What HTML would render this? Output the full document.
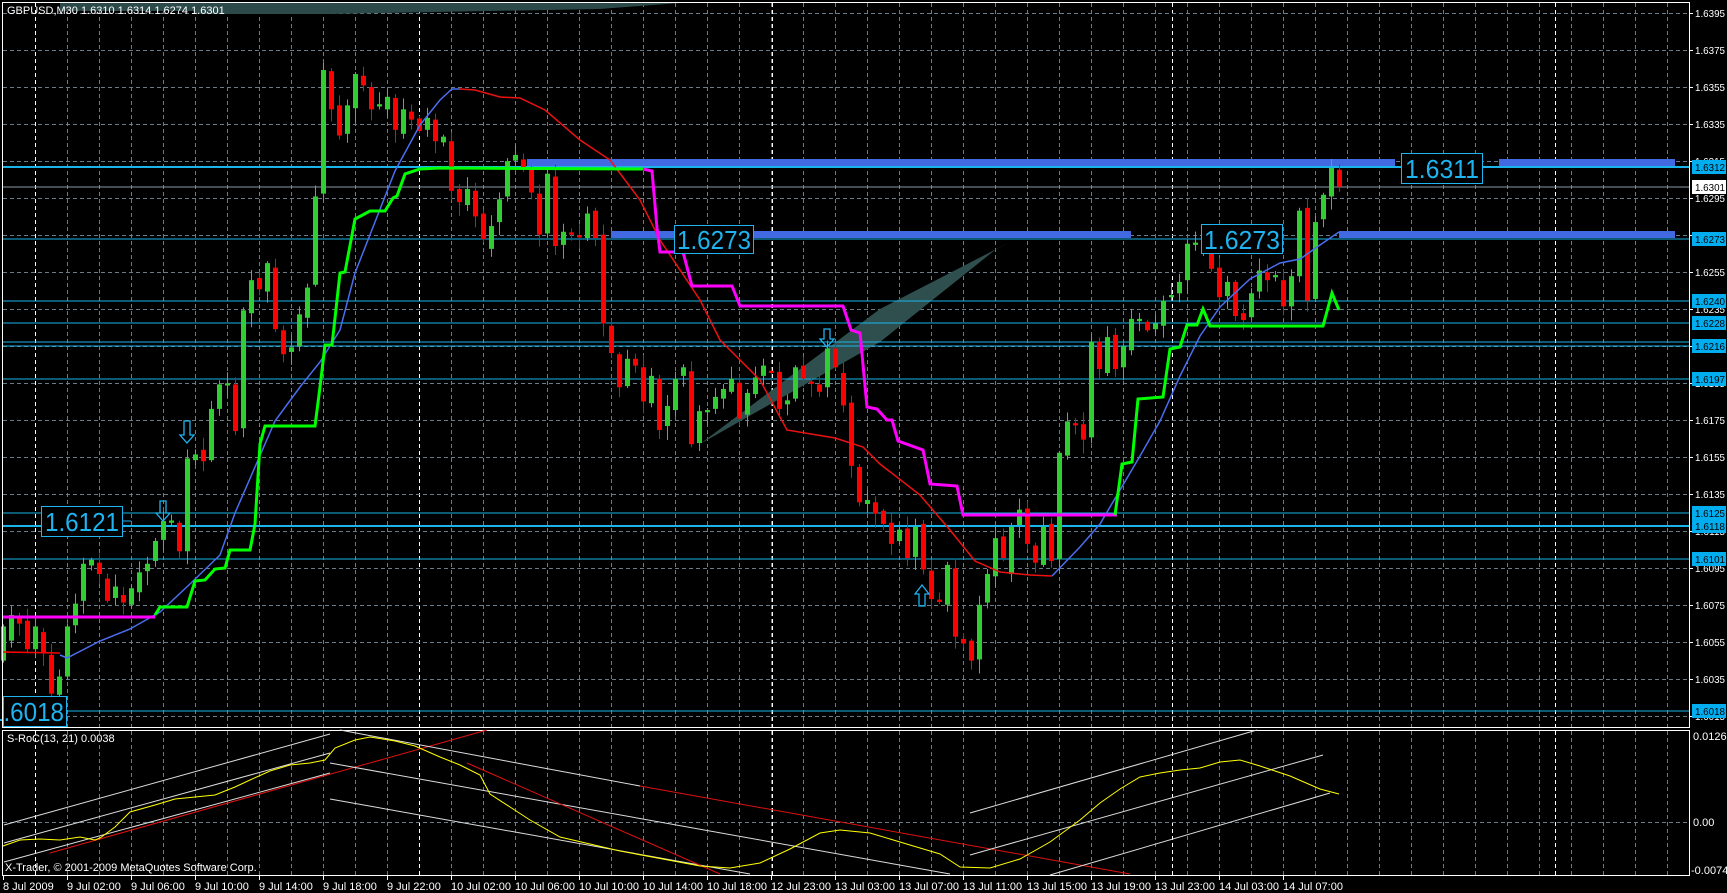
<!DOCTYPE html>
<html><head><meta charset="utf-8">
<style>
html,body{margin:0;padding:0;background:#000;width:1727px;height:893px;overflow:hidden}
svg{display:block}
text{font-family:"Liberation Sans",sans-serif}
</style></head>
<body>
<svg id="s" width="1727" height="893" xmlns="http://www.w3.org/2000/svg">
<rect width="1727" height="893" fill="#000"/>
<g id="grid"></g>
<polygon points="60,3 680,3 600,9 330,14 195,14 195,11 60,11" fill="#2c4a4a"/>
<polygon points="700,444 880,309 1010,242 995,250 880,342" fill="#2f4f4f"/>
<g id="hlines"></g>
<rect x="527" y="159" width="868" height="7" fill="#4169e1"/>
<rect x="1499" y="159" width="176" height="7" fill="#4169e1"/>
<rect x="611" y="231" width="520" height="7" fill="#4169e1"/>
<rect x="1339" y="231" width="336" height="7" fill="#4169e1"/>
<g id="candles"></g>
<polyline fill="none" stroke="#ff0000" stroke-width="1.5" points="3,652 60,653"/>
<polyline fill="none" stroke="#4a6ef0" stroke-width="1.5" points="60,655 67,658 100,641 130,629 160,612 190,584 220,555 235,513 255,467 275,421 300,387 320,362 340,330 355,273 375,222 395,171 420,125 440,100 452,89 460,89"/>
<polyline fill="none" stroke="#ee1111" stroke-width="1.5" points="460,89 475,90 500,97 520,98 545,110 580,140 610,160 640,200 660,240 680,270 700,300 720,340 740,360 760,380 787,430 835,438 863,447 880,464 920,495 950,530 975,561 1000,572 1030,575 1052,576"/>
<polyline fill="none" stroke="#4a6ef0" stroke-width="1.5" points="1052,576 1080,547 1100,524 1120,490 1140,456 1160,421 1180,376 1200,336 1220,307 1250,279 1280,263 1300,259 1320,245 1339,232"/>
<polyline fill="none" stroke="#ff00ff" stroke-width="3" points="3,617 155,617"/>
<polyline fill="none" stroke="#00ff00" stroke-width="3" points="155,615 160,607 187,607 195,581 205,580 215,569 225,568 230,550 250,550 255,524 260,444 265,426 315,426 320,387 325,345 332,345 340,273 345,272 355,219 370,211 385,211 393,198 397,196 405,174 420,169 440,168 643,169"/>
<polyline fill="none" stroke="#ff00ff" stroke-width="3" points="643,169 652,171 657,228 660,252 683,252 692,286 732,286 740,306 843,306 851,330 860,333 867,407 877,409 887,420 892,420 898,441 923,450 930,484 957,486 963,515 1117,515"/>
<polyline fill="none" stroke="#00ff00" stroke-width="3" points="1115,515 1122,464 1132,462 1138,399 1163,397 1170,349 1180,347 1187,325 1197,325 1203,309 1210,326 1323,326 1332,293 1339,310"/>
<g fill="none" stroke="#1fb4f0" stroke-width="1.3">
<path d="M160,501 h6 v12 h4 l-7,8 l-7,-8 h4 z"/>
<path d="M184,421 h6 v14 h4 l-7,8 l-7,-8 h4 z"/>
<path d="M824,329 h6 v10 h4 l-7,8 l-7,-8 h4 z"/>
<path d="M919,606 h6 v-12 h4 l-7,-9 l-7,9 h4 z"/>
</g>
<g fill="#000" stroke="#1fb4f0" stroke-width="1">
<rect x="1401.5" y="153.5" width="81" height="30"/>
<rect x="674.5" y="225.5" width="79" height="28"/>
<rect x="1201.5" y="224.5" width="81" height="29"/>
<rect x="41.5" y="506.5" width="81" height="30"/>
<rect x="3.5" y="696.5" width="63" height="30"/>
</g>
<line x1="1482" y1="167" x2="1492" y2="167" stroke="#1fb4f0"/>
<line x1="122" y1="521" x2="131" y2="521" stroke="#1fb4f0"/>
<g fill="#1fb4f0" font-size="26">
<text x="1405" y="178" textLength="74" lengthAdjust="spacingAndGlyphs">1.6311</text>
<text x="677" y="249" textLength="74" lengthAdjust="spacingAndGlyphs">1.6273</text>
<text x="1204" y="249" textLength="76" lengthAdjust="spacingAndGlyphs">1.6273</text>
<text x="45" y="531" textLength="74" lengthAdjust="spacingAndGlyphs">1.6121</text>
<text x="-10" y="721" textLength="74" lengthAdjust="spacingAndGlyphs">1.6018</text>
</g>
<rect x="2.5" y="2.5" width="1687" height="725" fill="none" stroke="#fff"/>
<rect x="2.5" y="730.5" width="1687" height="145" fill="none" stroke="#fff"/>
<g fill="none" stroke-width="1">
<line x1="4" y1="825" x2="330" y2="734" stroke="#ddd"/>
<line x1="4" y1="843" x2="330" y2="753" stroke="#ddd"/>
<line x1="4" y1="862" x2="330" y2="773" stroke="#ddd"/>
<line x1="50" y1="853" x2="487" y2="730" stroke="#e01010"/>
<line x1="340" y1="730" x2="640" y2="786" stroke="#ddd"/>
<line x1="640" y1="786" x2="1130" y2="874" stroke="#e01010"/>
<line x1="330" y1="763" x2="950" y2="874" stroke="#ddd"/>
<line x1="330" y1="799" x2="750" y2="874" stroke="#ddd"/>
<line x1="467" y1="763" x2="720" y2="874" stroke="#e01010"/>
<line x1="970" y1="813" x2="1257" y2="730" stroke="#ddd"/>
<line x1="970" y1="855" x2="1323" y2="755" stroke="#ddd"/>
<line x1="1050" y1="875" x2="1330" y2="793" stroke="#ddd"/>
<polyline stroke="#ffff00" points="3,846 20,840 40,839 60,840 80,837 95,840 100,838 115,827 130,812 155,805 175,799 195,797 215,795 235,787 250,780 270,771 290,765 310,763 325,760 335,748 355,740 370,737 395,741 415,746 440,757 460,765 480,775 490,794 530,820 560,837 620,851 700,866 730,868 760,863 790,849 820,833 840,830 870,833 900,842 940,854 960,867 990,868 1020,859 1050,842 1080,820 1100,803 1120,789 1140,777 1160,773 1180,770 1200,768 1220,762 1240,760 1260,766 1290,776 1320,789 1339,794"/>
</g>
<g fill="#fff" font-size="11">
<text x="7" y="14">GBPUSD,M30  1.6310 1.6314 1.6274 1.6301</text>
<text x="7" y="742">S-RoC(13, 21) 0.0038</text>
<text x="5" y="871">X-Trader, © 2001-2009 MetaQuotes Software Corp.</text>
<text x="1693" y="740">0.0126</text>
<text x="1693" y="826">0.00</text>
<text x="1691" y="874">-0.0074</text>
</g>
<g id="axis"></g>
</svg>
<script>
(function(){
var NS="http://www.w3.org/2000/svg";
function el(p,t,a,txt){var e=document.createElementNS(NS,t);for(var k in a)e.setAttribute(k,a[k]);if(txt!=null)e.textContent=txt;p.appendChild(e);return e;}
var g=document.getElementById('grid');
for(var x=35;x<1689;x+=32){el(g,'line',{x1:x+.5,y1:3,x2:x+.5,y2:875,stroke:'#6a7c8a','stroke-dasharray':'4,3'});}
[35,419,772,1172,1555].forEach(function(x){el(g,'line',{x1:x+.5,y1:3,x2:x+.5,y2:875,stroke:'#fff','stroke-dasharray':'4,3'});});
var ax=document.getElementById('axis');
var prices=['1.6395','1.6375','1.6355','1.6335','1.6315','1.6295','1.6275','1.6255','1.6235','1.6215','1.6195','1.6175','1.6155','1.6135','1.6115','1.6095','1.6075','1.6055','1.6035','1.6015'];
for(var i=0;i<20;i++){var y=13+37*i;el(g,'line',{x1:3,y1:y+.5,x2:1689,y2:y+.5,stroke:'#6a7c8a','stroke-dasharray':'4,3'});
 el(ax,'line',{x1:1689,y1:y+.5,x2:1693,y2:y+.5,stroke:'#fff'});
 el(ax,'text',{x:1695,y:y+4,fill:'#fff','font-size':'10.5',textLength:'30',lengthAdjust:'spacingAndGlyphs'},prices[i]);}
el(g,'line',{x1:3,y1:822.5,x2:1689,y2:822.5,stroke:'#6a7c8a','stroke-dasharray':'4,3'});
var h=document.getElementById('hlines');
var lv=[[167,'1.6312',2],[239,'1.6273',1],[301,'1.6240',1],[323,'1.6228',1],[342,'',1],[346,'1.6216',1],[379,'1.6197',1],[513,'1.6125',1],[526,'1.6118',2],[559,'1.6101',1],[711,'1.6018',1]];
lv.forEach(function(l){el(h,'line',{x1:3,y1:l[0],x2:1689,y2:l[0],stroke:'#1ab4ea','stroke-width':l[2]});
 if(l[1]){el(ax,'rect',{x:1692,y:l[0]-7,width:34,height:14,fill:'#00aeef'});el(ax,'text',{x:1695,y:l[0]+4,fill:'#000','font-size':'10.5',textLength:'30',lengthAdjust:'spacingAndGlyphs'},l[1]);}});
el(h,'line',{x1:3,y1:187,x2:1689,y2:187,stroke:'#8a9aa4'});
el(ax,'rect',{x:1692,y:180,width:34,height:14,fill:'#fff'});el(ax,'text',{x:1695,y:191,fill:'#000','font-size':'10.5',textLength:'30',lengthAdjust:'spacingAndGlyphs'},'1.6301');
var tl=['9 Jul 02:00','9 Jul 06:00','9 Jul 10:00','9 Jul 14:00','9 Jul 18:00','9 Jul 22:00','10 Jul 02:00','10 Jul 06:00','10 Jul 10:00','10 Jul 14:00','10 Jul 18:00','12 Jul 23:00','13 Jul 03:00','13 Jul 07:00','13 Jul 11:00','13 Jul 15:00','13 Jul 19:00','13 Jul 23:00','14 Jul 03:00','14 Jul 07:00'];
el(ax,'text',{x:3,y:890,fill:'#fff','font-size':'11'},'8 Jul 2009');
el(ax,'line',{x1:3.5,y1:876,x2:3.5,y2:880,stroke:'#fff'});
for(var i=0;i<tl.length;i++){var x=67+64*i;el(ax,'line',{x1:x+.5,y1:876,x2:x+.5,y2:880,stroke:'#fff'});el(ax,'text',{x:x,y:890,fill:'#fff','font-size':'11'},tl[i]);}
var d="g 1100 1160,g 1080 1125,r 1085 1095,r 1090 1140,g 1100 1140,r 1110 1145,r 1150 1218,g 1188 1220,g 1100 1188,g 1060 1098,g 990 1055,g 983 993,r 988 1008,r 1016 1055,g 1030 1050,r 1045 1058,g 1033 1062,g 1005 1040,g 990 1003,g 950 985,g 915 948,g 914 918,r 918 968,g 805 968,g 798 808,r 790 810,g 718 808,g 675 718,g 673 677,r 675 757,g 545 752,g 492 550,r 488 508,g 462 512,r 470 578,r 580 622,g 610 618,g 552 608,g 505 558,g 345 500,g 123 340,r 125 192,r 185 238,g 185 235,g 130 190,r 133 150,r 153 192,g 183 187,g 170 192,r 172 228,g 192 235,r 196 210,r 208 230,g 207 228,r 210 248,g 240 250,r 248 335,r 332 355,g 332 360,r 335 380,r 375 420,g 397 437,g 350 390,g 283 345,g 272 282,r 280 298,r 295 338,r 340 412,g 305 410,r 310 432,g 407 430,r 408 412,r 413 417,g 375 418,r 370 418,r 412 568,r 572 620,r 622 680,g 630 678,r 630 642,r 645 705,g 660 708,r 665 755,g 713 748,g 665 720,g 645 660,r 652 780,g 722 778,g 720 724,g 697 718,g 683 700,g 665 688,r 672 735,g 690 728,g 663 692,g 642 660,r 651 655,r 653 718,g 703 710,g 645 700,r 642 665,r 670 674,r 675 688,g 612 680,r 612 645,r 655 712,r 707 818,r 820 882,g 878 885,r 882 902,r 897 920,r 918 955,g 930 950,r 928 980,g 925 978,r 920 1000,r 1002 1052,r 1053 1057,g 992 1062,r 998 1118,r 1122 1130,r 1125 1160,g 1062 1158,g 1008 1058,g 945 1012,r 942 980,g 925 1008,g 895 922,r 893 955,r 958 988,g 925 992,r 920 985,g 795 982,g 740 800,r 743 747,r 745 772,g 600 768,r 600 648,g 592 655,r 588 648,g 608 645,g 560 615,g 560 564,r 565 580,g 568 578,g 528 572,g 518 522,g 495 515,g 428 492,g 426 430,g 426 430,r 428 472,r 470 522,g 495 520,r 495 555,r 550 562,g 515 557,g 475 512,r 478 492,g 483 487,r 492 538,g 485 538,g 370 485,r 365 528,g 390 525,g 342 385,g 295 345,r 298 328".split(',');
var c=document.getElementById('candles');
d.forEach(function(s,i){var p=s.split(' ');var col=p[0]=='g'?'#32cd32':'#ff0000';
 var t=(+p[1])/1.756,b=(+p[2])/1.756;if(b-t<1.5)b=t+1.5;
 var x=3+8*i;var hi=t-(2+(i*7)%11),lo=b+(2+(i*5)%13);
 el(c,'line',{x1:x+.5,y1:hi,x2:x+.5,y2:lo,stroke:col});
 el(c,'rect',{x:x-2,y:t,width:5,height:b-t,fill:col});});
})();
</script>
</body></html>
